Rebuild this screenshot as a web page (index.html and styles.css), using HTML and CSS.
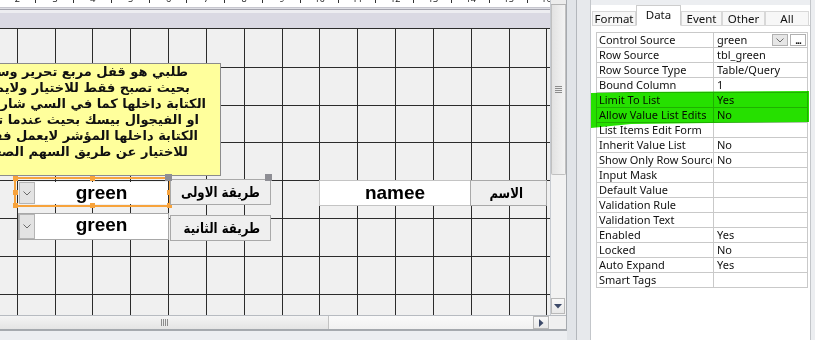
FILE: index.html
```html
<!DOCTYPE html>
<html lang="en">

<head>
    <meta charset="UTF-8">
    <title>Form Design</title>
    <link rel="stylesheet" href="styles.css">
</head>

<body>
    <div class="app">
        <div class="design">
            <div class="design-top">
                <div class="canvas-col">
                    <div class="ruler">
                        <div class="cell"><span>2</span></div>
                        <div class="cell"><span>3</span></div>
                        <div class="cell"><span>4</span></div>
                        <div class="cell"><span>5</span></div>
                        <div class="cell"><span>6</span></div>
                        <div class="cell"><span>7</span></div>
                        <div class="cell"><span>8</span></div>
                        <div class="cell"><span>9</span></div>
                        <div class="cell"><span>10</span></div>
                        <div class="cell"><span>11</span></div>
                        <div class="cell"><span>12</span></div>
                        <div class="cell"><span>13</span></div>
                        <div class="cell"><span>14</span></div>
                        <div class="cell"><span>15</span></div>
                        <div class="cell"><span>16</span></div>
                    </div>
                    <div class="ruler-edge"></div>
                    <div class="section-bar"></div>
                    <div class="grid">
                        <svg class="grid-lines" width="550" height="286" viewBox="0 0 550 286">
                            <path d="M17.5 0V286M55.5 0V286M92.5 0V286M130.5 0V286M168.5 0V286M206.5 0V286M244.5 0V286M282.5 0V286M319.5 0V286M357.5 0V286M395.5 0V286M433.5 0V286M471.5 0V286M509.5 0V286M546.5 0V286M0 38.5H550M0 76.5H550M0 113.5H550M0 151.5H550M0 189.5H550M0 227.5H550M0 265.5H550" />
                        </svg>

                        <!-- الملاحظة الصفراء -->
                        <div class="note">
                            <p>طلبي هو قفل مربع تحرير وسرد</p>
                            <p>بحيث تصبح فقط للاختيار ولايمكن</p>
                            <p>الكتابة داخلها كما في السي شارب</p>
                            <p>او الفيجوال بيسك بحيث عندما تريد</p>
                            <p>الكتابة داخلها المؤشر لايعمل فقط</p>
                            <p>للاختيار عن طريق السهم الصغير</p>
                        </div>

                        <div class="combo-sel">
                            <div class="combo">
                                <div class="drop">
                                    <svg width="8" height="5" viewBox="0 0 8 5"><path d="M0.5 0.5L4 4L7.5 0.5" /></svg>
                                </div>
                                <div class="combo-text">green</div>
                            </div>
                            <i class="h h-tl"></i><i class="h h-tm"></i>
                            <i class="h h-ml"></i><i class="h h-mr"></i>
                            <i class="h h-bl"></i><i class="h h-bm"></i><i class="h h-br"></i>
                        </div>

                        <div class="combo combo2">
                            <div class="drop">
                                <svg width="8" height="5" viewBox="0 0 8 5"><path d="M0.5 0.5L4 4L7.5 0.5" /></svg>
                            </div>
                            <div class="combo-text">green</div>
                        </div>

                        <div class="lbl lbl1"><span>طريقة الاولى</span></div>
                        <div class="lbl lbl2"><span>طريقة الثانية</span></div>

                        <div class="textbox">namee</div>
                        <div class="lbl lbl3"><span>الاسم</span></div>

                        <i class="move move1"></i>
                        <i class="move move2"></i>
                    </div>
                </div>
                <div class="vscroll">
                    <div class="vcap"></div>
                    <div class="vthumb"><b></b><b></b><b></b><b></b></div>
                    <div class="vtrack"></div>
                    <div class="sbtn">
                        <svg width="8" height="5" viewBox="0 0 8 5"><path d="M0 0H8L4 4.5Z" /></svg>
                    </div>
                </div>
            </div>
            <div class="design-bottom">
                <div class="hscroll">
                    <div class="hthumb"><b></b><b></b><b></b><b></b></div>
                    <div class="htrack"></div>
                    <div class="sbtn sbtn-h">
                        <svg width="5" height="8" viewBox="0 0 5 8"><path d="M0 0V8L4.5 4Z" /></svg>
                    </div>
                </div>
                <div class="corner"></div>
            </div>
        </div>

        <div class="gutter">
            <div class="g1"></div>
            <div class="g2"></div>
        </div>

        <div class="props">
            <div class="props-cap"></div>
            <div class="tabs">
                <div class="tab">Format</div>
                <div class="tab active">Data</div>
                <div class="tab">Event</div>
                <div class="tab">Other</div>
                <div class="tab">All</div>
            </div>
            <div class="sheet">
                <div class="row"><div class="name">Control Source</div><div class="val">green
                    <span class="vbtns">
                        <span class="vdrop"><svg width="8" height="5" viewBox="0 0 8 5"><path d="M0.5 0.5L4 4L7.5 0.5" /></svg></span>
                        <span class="vdots">...</span>
                    </span></div></div>
                <div class="row"><div class="name">Row Source</div><div class="val">tbl_green</div></div>
                <div class="row"><div class="name">Row Source Type</div><div class="val">Table/Query</div></div>
                <div class="row"><div class="name">Bound Column</div><div class="val">1</div></div>
                <div class="row"><div class="name">Limit To List</div><div class="val">Yes</div></div>
                <div class="row"><div class="name">Allow Value List Edits</div><div class="val">No</div></div>
                <div class="row"><div class="name">List Items Edit Form</div><div class="val"></div></div>
                <div class="row"><div class="name">Inherit Value List</div><div class="val">No</div></div>
                <div class="row"><div class="name"><span class="clip">Show Only Row Source Values</span></div><div class="val">No</div></div>
                <div class="row"><div class="name">Input Mask</div><div class="val"></div></div>
                <div class="row"><div class="name">Default Value</div><div class="val"></div></div>
                <div class="row"><div class="name">Validation Rule</div><div class="val"></div></div>
                <div class="row"><div class="name">Validation Text</div><div class="val"></div></div>
                <div class="row"><div class="name">Enabled</div><div class="val">Yes</div></div>
                <div class="row"><div class="name">Locked</div><div class="val">No</div></div>
                <div class="row"><div class="name">Auto Expand</div><div class="val">Yes</div></div>
                <div class="row"><div class="name">Smart Tags</div><div class="val"></div></div>
            </div>
            <!-- خط التظليل الاخضر -->
            <svg class="marker" width="220" height="40" viewBox="0 0 220 40">
                <path d="M0 2L40 1L218 0V31L120 32L40 33L0 37Z" />
            </svg>
        </div>
    </div>
</body>

</html>
```

FILE: styles.css
```css
* {
    margin: 0;
    padding: 0;
    box-sizing: border-box;
}

body {
    width: 815px;
    height: 340px;
    overflow: hidden;
    background-color: #eceef1;
    font-family: "Noto Sans", sans-serif;
}

.app {
    display: flex;
    height: 340px;
}

/* ---------- design view ---------- */

.design {
    width: 567px;
    height: 331px;
    display: flex;
    flex-direction: column;
    border-right: 1px solid #a6aaaf;
    border-bottom: 1px solid #a6aaaf;
}

.design-top {
    display: flex;
    height: 315px;
}

.canvas-col {
    width: 550px;
    display: flex;
    flex-direction: column;
}

.ruler {
    height: 7px;
    background-color: #fff;
    display: flex;
    overflow: hidden;
}

.ruler .cell {
    flex: 0 0 37.8px;
    position: relative;
    text-align: center;
    font-size: 9px;
    line-height: 9px;
    color: #222;
}

.ruler .cell:first-child {
    margin-left: -1.6px;
}

.ruler .cell span {
    display: block;
    margin-top: -6px;
}

.ruler .cell::after {
    content: "";
    position: absolute;
    right: 0;
    top: 0;
    width: 1px;
    height: 3px;
    background-color: #333;
}

.ruler-edge {
    height: 6px;
    background: linear-gradient(#c6c6ce 0 1px, #dedee4 1px 2px, #a4a4ae 2px 3px, #ededf1 3px);
}

.section-bar {
    height: 16px;
    background-color: #dad9e3;
    border-bottom: 1px solid #2b2b2b;
}

.grid {
    flex: 1;
    position: relative;
    background-color: #f0f0f0;
    overflow: hidden;
}

.grid-lines {
    display: block;
}

.grid-lines path {
    stroke: #2b2b2b;
    stroke-width: 1;
    fill: none;
    shape-rendering: crispEdges;
}

/* controls on the form */

.note {
    position: absolute;
    left: -80px;
    top: 34px;
    width: 301px;
    height: 113px;
    background-color: #ffff9c;
    border: 1px solid #8c8c8c;
    overflow: hidden;
    font-family: "DejaVu Sans", sans-serif;
    font-weight: bold;
    font-size: 13px;
    line-height: 16px;
    color: #111;
}

.note p {
    direction: rtl;
    text-align: right;
    white-space: nowrap;
}

.note p:nth-child(1) { padding-right: 32px; }
.note p:nth-child(2) { padding-right: 30px; }
.note p:nth-child(3) { padding-right: 14px; }
.note p:nth-child(4) { padding-right: 21px; }
.note p:nth-child(5) { padding-right: 22px; }
.note p:nth-child(6) { padding-right: 32px; }

.combo-sel {
    position: absolute;
    left: 14px;
    top: 148px;
    width: 157px;
    height: 30px;
    border: 2px solid #f7a33c;
    padding: 3px 1px 1px 3px;
    display: flex;
}

.combo {
    flex: 1;
    display: flex;
    background-color: #fff;
}

.combo2 {
    position: absolute;
    left: 18px;
    top: 184px;
    width: 151px;
    height: 27px;
    border: 1px solid #a8a8a8;
}

.drop {
    width: 16px;
    background-color: #e3e3e3;
    border: 1px solid #b4b4b4;
    display: flex;
    align-items: center;
    justify-content: center;
}

.drop svg path,
.vdrop svg path {
    stroke: #6a6a6a;
    fill: none;
}

.combo-text {
    flex: 1;
    text-align: center;
    font-family: "Liberation Sans", Arial, sans-serif;
    font-weight: bold;
    font-size: 19px;
    line-height: 21px;
    color: #000;
}

.h {
    position: absolute;
    width: 5px;
    height: 5px;
    background-color: #f7a33c;
}

.h-tl { left: -3px; top: -3px; }
.h-tm { left: 74px; top: -3px; }
.h-ml { left: -3px; top: 11px; }
.h-mr { right: -3px; top: 11px; }
.h-bl { left: -3px; bottom: -3px; }
.h-bm { left: 74px; bottom: -3px; }
.h-br { right: -3px; bottom: -3px; }

.move {
    position: absolute;
    width: 7px;
    height: 7px;
    background-color: #8e8e94;
    top: 145px;
}

.move1 { left: 165px; }
.move2 { left: 265px; }

.lbl {
    position: absolute;
    height: 26px;
    background-color: #efefef;
    border: 1px solid #a9a9a9;
    direction: rtl;
    font-family: "DejaVu Sans", sans-serif;
    font-weight: bold;
    font-size: 14px;
    line-height: 24px;
    color: #000;
    white-space: nowrap;
}

.lbl span {
    display: inline-block;
    transform: scaleX(0.84);
    transform-origin: right center;
}

.lbl1 {
    left: 170px;
    top: 150px;
    width: 101px;
    padding-right: 10px;
}

.lbl2 {
    left: 170px;
    top: 186px;
    width: 101px;
    padding-right: 10px;
}

.lbl3 {
    left: 470px;
    top: 151px;
    width: 77px;
    padding-right: 23px;
}

.textbox {
    position: absolute;
    left: 319px;
    top: 151px;
    width: 152px;
    height: 26px;
    background-color: #fff;
    border: 1px solid #c4c4c4;
    text-align: center;
    font-family: "Liberation Sans", Arial, sans-serif;
    font-weight: bold;
    font-size: 19px;
    line-height: 23px;
}

/* scrollbars */

.vscroll {
    width: 16px;
    border-left: 1px solid #c6cad0;
    background-color: #f2f2f2;
    display: flex;
    flex-direction: column;
}

.vcap {
    height: 5px;
    border-bottom: 1px solid #b4b4b4;
    background-color: #ececec;
}

.vthumb {
    height: 170px;
    background: linear-gradient(to right, #e2e2e2, #f3f3f3);
    border: 1px solid #c0c0c0;
    border-top: none;
    border-radius: 0 0 2px 2px;
    display: flex;
    flex-direction: column;
    justify-content: center;
    align-items: center;
    gap: 1px;
}

.vthumb b {
    width: 7px;
    height: 1px;
    background-color: #8c8c8c;
}

.vtrack {
    flex: 1;
}

.sbtn {
    height: 16px;
    margin: 0 1px 1px 0;
    background: linear-gradient(#f8f8f8, #e8e8e8);
    border: 1px solid #b9b9b9;
    display: flex;
    align-items: center;
    justify-content: center;
}

.sbtn svg path {
    fill: #3d4a69;
}

.design-bottom {
    display: flex;
    height: 15px;
    border-top: 1px solid #b7bbc1;
    border-bottom: 1px solid #a4a8ad;
}

.hscroll {
    width: 550px;
    display: flex;
    background: linear-gradient(#fafafa, #f1f1f1);
}

.hthumb {
    width: 329px;
    background: linear-gradient(#f4f4f4, #e4e4e4);
    border-right: 1px solid #c2c2c2;
    display: flex;
    justify-content: center;
    align-items: center;
    gap: 1px;
}

.hthumb b {
    width: 1px;
    height: 7px;
    background-color: #8c8c8c;
}

.htrack {
    flex: 1;
}

.sbtn-h {
    width: 16px;
    height: 13px;
    margin: 0 1px 0 0;
}

.corner {
    flex: 1;
    background-color: #f0f0f0;
}

/* ---------- splitter ---------- */

.gutter {
    display: flex;
    width: 23px;
}

.g1 {
    width: 10px;
    background-color: #e1e4e8;
    border-right: 1px solid #b3b7bc;
}

.g2 {
    flex: 1;
    background-color: #e7e9ec;
}

/* ---------- property sheet ---------- */

.props {
    width: 221px;
    position: relative;
    background-color: #fff;
    border-left: 1px solid #c3c6ca;
    border-right: 1px solid #c3c6ca;
    font-size: 11px;
    color: #111;
}

.props-cap {
    height: 5px;
    background-color: #eceef1;
}

.tabs {
    display: flex;
    align-items: flex-end;
    height: 21px;
    margin-left: 1px;
    border-bottom: 1px solid #d2d2d2;
    font-size: 11.5px;
}

.tab {
    height: 15px;
    width: 43px;
    margin-bottom: -1px;
    background-color: #f7f7f7;
    border: 1px solid #d8d8d8;
    text-align: center;
    line-height: 13px;
}

.tab:nth-child(1) { width: 44px; }
.tab:nth-child(3) { width: 41px; }
.tab:nth-child(5) { width: 44px; }

.tab.active {
    width: 45px;
    height: 21px;
    background-color: #fff;
    border-color: #cdcdcd;
    border-bottom-color: #fff;
    line-height: 17px;
}

.sheet {
    width: 212px;
    margin: 6px 0 0 5px;
    border: 1px solid #c9c9c9;
    border-bottom: none;
}

.row {
    display: flex;
    height: 15px;
    border-bottom: 1px solid #c9c9c9;
    line-height: 14px;
}

.name {
    width: 117px;
    padding-left: 2px;
    border-right: 1px solid #c9c9c9;
    white-space: nowrap;
    overflow: hidden;
}

.name .clip {
    display: block;
    width: 113px;
    overflow: hidden;
}

.val {
    flex: 1;
    padding-left: 3px;
    display: flex;
    white-space: nowrap;
}

.vbtns {
    margin-left: auto;
    display: flex;
    gap: 2px;
    padding: 1px 1px 0 0;
}

.vdrop,
.vdots {
    width: 16px;
    height: 12px;
    border: 1px solid #b0b0b0;
    display: flex;
    align-items: center;
    justify-content: center;
}

.vdrop {
    background-color: #e6e6e6;
}

.vdots {
    background-color: #fff;
    font-weight: bold;
    font-size: 10px;
    line-height: 6px;
    letter-spacing: -1px;
}

.marker {
    position: absolute;
    left: 0;
    top: 91px;
    mix-blend-mode: multiply;
}

.marker path {
    fill: #26e000;
}
```
